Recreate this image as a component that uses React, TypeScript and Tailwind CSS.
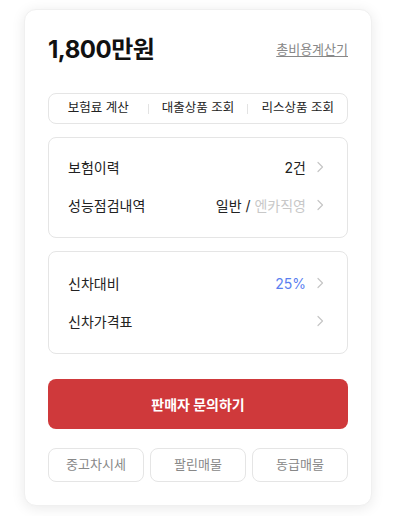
import React from "react";

const Chevron = () => (
  <svg width="16" height="16" viewBox="0 0 16 16" fill="none" className="shrink-0">
    <path d="M6 3.5 L10.5 8 L6 12.5" stroke="#c6c6c6" strokeWidth="1.2" strokeLinecap="round" strokeLinejoin="round" />
  </svg>
);

const Row = ({ label, children }: { label: string; children?: React.ReactNode }) => (
  <div className="flex items-center justify-between h-[38px]">
    <span className="text-[14px] text-[#222]">{label}</span>
    <div className="flex items-center gap-[6px]">
      <span className="text-[14px]">{children}</span>
      <Chevron />
    </div>
  </div>
);

export default function App() {
  return (
    <div
      className="w-[405px] h-[516px] bg-white pt-[9px] pl-[24px]"
      style={{ fontFamily: 'Inter, "Noto Sans CJK KR", sans-serif' }}
    >
      <div className="w-[348px] h-[497px] rounded-[12px] bg-white shadow-[0_2px_14px_rgba(0,0,0,0.09)] border border-[#f0f0f0] px-[23px] pt-[24px]">
        <div className="flex items-center justify-between h-[32px]">
          <span className="text-[24px] font-bold text-[#111] tracking-[-0.5px]">1,800만원</span>
          <span className="text-[13px] text-[#888] underline underline-offset-2">총비용계산기</span>
        </div>
        <div className="mt-[27px] h-[31px] rounded-[8px] border border-[#e5e5e5] flex items-center text-[12.5px] text-[#222]">
          <div className="flex-1 text-center">보험료 계산</div>
          <div className="w-px h-[10px] bg-[#e3e3e3]" />
          <div className="flex-1 text-center">대출상품 조회</div>
          <div className="w-px h-[10px] bg-[#e3e3e3]" />
          <div className="flex-1 text-center">리스상품 조회</div>
        </div>
        <div className="mt-[13px] rounded-[8px] border border-[#e5e5e5] px-[19px] pt-[10px] h-[101px]">
          <Row label="보험이력"><span className="text-[#222]">2건</span></Row>
          <Row label="성능점검내역">
            <span className="text-[#222]">일반 / </span>
            <span className="text-[#c8c8c8]">엔카직영</span>
          </Row>
        </div>
        <div className="mt-[13px] rounded-[8px] border border-[#e5e5e5] px-[19px] pt-[12px] h-[103px]">
          <Row label="신차대비"><span className="text-[#5b7ff0]">25%</span></Row>
          <Row label="신차가격표" />
        </div>
        <button className="mt-[25px] w-full h-[50px] rounded-[8px] bg-[#cf393b] text-white text-[14px] font-bold">
          판매자 문의하기
        </button>
        <div className="mt-[19px] grid grid-cols-3 gap-[6px]">
          {["중고차시세", "팔린매물", "동급매물"].map((t) => (
            <div key={t} className="h-[34px] rounded-[8px] border border-[#e5e5e5] flex items-center justify-center text-[13px] text-[#888]">
              {t}
            </div>
          ))}
        </div>
      </div>
    </div>
  );
}
